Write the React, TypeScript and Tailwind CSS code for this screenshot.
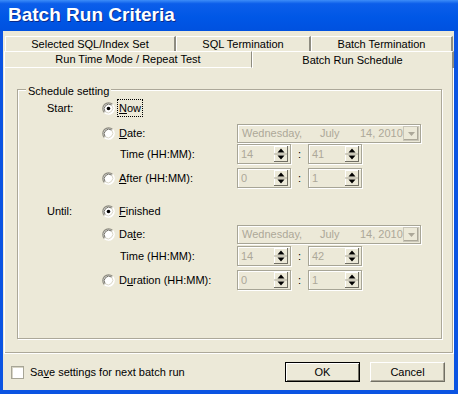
const font = "font-['Liberation_Sans',Arial,sans-serif]";

function Radio({ checked }: { checked?: boolean }) {
  return (
    <svg width="13" height="13" viewBox="0 0 13 13" className="shrink-0">
      <circle cx="6.5" cy="6.5" r="5.8" fill="#ffffff" />
      <path d="M2.4 10.6 A5.8 5.8 0 0 1 10.6 2.4" fill="none" stroke="#8E8C80" strokeWidth="1.2" />
      <path d="M10.6 2.4 A5.8 5.8 0 0 1 2.4 10.6" fill="none" stroke="#ffffff" strokeWidth="1.2" />
      <path d="M3.2 9.8 A4.7 4.7 0 0 1 9.8 3.2" fill="none" stroke="#6E6C62" strokeWidth="1" />
      <path d="M9.8 3.2 A4.7 4.7 0 0 1 3.2 9.8" fill="none" stroke="#D8D5C6" strokeWidth="1" />
      {checked && <circle cx="6.5" cy="6.5" r="1.8" fill="#000000" />}
    </svg>
  );
}

function SpinButtons() {
  return (
    <svg width="14" height="16" viewBox="0 0 14 16" className="shrink-0 mr-[2px]">
      <rect x="0" y="0" width="14" height="16" fill="#ECE9D8" />
      <path d="M0 0.5 H13.5 M0.5 0 V16" stroke="#ffffff" strokeWidth="1" />
      <path d="M13.5 0 V16 M0 15.5 H14" stroke="#716F64" strokeWidth="1" />
      <path d="M0 8 H13" stroke="#ACA899" strokeWidth="1" />
      <polygon points="3.5,6.5 10.5,6.5 7,2.5" fill="#000000" />
      <polygon points="3.5,9.5 10.5,9.5 7,13.5" fill="#000000" />
    </svg>
  );
}

function Spin({ value }: { value: string }) {
  return (
    <div className="w-[54px] h-[20px] flex items-center border border-[#A7A596] shadow-[inset_1px_1px_0_#ffffff,1px_1px_0_#ffffff]">
      <span className="flex-1 pl-[3px] text-[#ACA899]">{value}</span>
      <SpinButtons />
    </div>
  );
}

function TimeRow({ a, b }: { a: string; b: string }) {
  return (
    <div className="flex items-center">
      <Spin value={a} />
      <span className="w-[17px] text-center">:</span>
      <Spin value={b} />
    </div>
  );
}

function DatePick() {
  return (
    <div className="w-[184px] h-[19px] flex items-center border border-[#A7A596] shadow-[inset_1px_1px_0_#ffffff,1px_1px_0_#ffffff] text-[#ACA899]">
      <span className="w-[82px] pl-[4px]">Wednesday,</span>
      <span className="w-[40px]">July</span>
      <span className="flex-1">14, 2010</span>
      <div className="w-[16px] h-[15px] mr-[1px] flex items-center justify-center border border-[#C9C6B8] bg-[#ECE9D8] shadow-[inset_-1px_-1px_0_#ACA899]">
        <svg width="7" height="4" viewBox="0 0 7 4">
          <polygon points="0,0 7,0 3.5,4" fill="#ACA899" />
        </svg>
      </div>
    </div>
  );
}

function Row({ label, top, h = 20, children }: { label?: string; top: string; h?: number; children: React.ReactNode }) {
  return (
    <div className={`flex items-center pl-[29px] ${top} ${h === 19 ? "h-[19px]" : "h-[20px]"}`}>
      <span className="w-[55px]">{label}</span>
      {children}
    </div>
  );
}

function Opt({ checked, focus, children }: { checked?: boolean; focus?: boolean; children: React.ReactNode }) {
  return (
    <div className="w-[135px] flex items-center">
      <Radio checked={checked} />
      <span className={`ml-[3px] px-[1px] ${focus ? "outline outline-1 outline-dotted outline-black" : ""}`}>{children}</span>
    </div>
  );
}

export default function App() {
  return (
    <div className={`w-[458px] h-[394px] bg-[#0B54E2] flex flex-col text-[11px] text-black ${font}`}>
      <div className="h-[31px] flex items-center pl-[8px] bg-[linear-gradient(to_bottom,#3D8DF8_0%,#0C5EEA_12%,#0057E6_55%,#0051DF_100%)]">
        <span className="text-white font-bold text-[19px] [text-shadow:1px_1px_0_#0A2A8A]">Batch Run Criteria</span>
      </div>
      <div className="flex-1 ml-[3px] mr-[4px] mb-[4px] bg-[#ECE9D8] flex flex-col">
        <div className="pt-[5px] ml-[1px] w-[450px]">
          <div className="flex h-[15px] ml-[1px]">
            <div className="w-[171px] flex items-center justify-center border-t border-l border-white border-r-2 border-r-[#8E8C80]">Selected SQL/Index Set</div>
            <div className="w-[135px] flex items-center justify-center border-t border-l border-white border-r-2 border-r-[#8E8C80]">SQL Termination</div>
            <div className="w-[142px] flex items-center justify-center border-t border-l border-white border-r-2 border-r-[#8E8C80]">Batch Termination</div>
          </div>
          <div className="flex h-[17px]">
            <div className="w-[248px] flex items-center justify-center border-t border-l border-b border-white border-r border-r-[#8E8C80]">Run Time Mode / Repeat Test</div>
            <div className="w-[202px] flex items-center justify-center border-t border-l border-white border-r-2 border-r-[#8E8C80]">Batch Run Schedule</div>
          </div>
          <div className="h-[286px] border-l border-white border-r border-b border-[#716F64] border-l-white shadow-[inset_-1px_-1px_0_#ACA899] pt-[21px] pl-[12px]">
            <div className="relative w-[425px] h-[250px] border border-[#ACA899] shadow-[inset_1px_1px_0_#ffffff,1px_1px_0_#ffffff] pt-[8px]">
              <span className="absolute -top-[7px] left-[8px] px-[2px] bg-[#ECE9D8]">Schedule setting</span>
              <Row label="Start:" top="">
                <Opt checked focus><span className="underline">N</span>ow</Opt>
              </Row>
              <Row top="mt-[6px]" h={19}>
                <Opt><span className="underline">D</span>ate:</Opt>
                <DatePick />
              </Row>
              <Row top="mt-[1px]">
                <span className="w-[135px] pl-[18px]">Time (HH:MM):</span>
                <TimeRow a="14" b="41" />
              </Row>
              <Row top="mt-[4px]">
                <Opt><span className="underline">A</span>fter (HH:MM):</Opt>
                <TimeRow a="0" b="1" />
              </Row>
              <Row label="Until:" top="mt-[13px]">
                <Opt checked><span className="underline">F</span>inished</Opt>
              </Row>
              <Row top="mt-[4px]" h={19}>
                <Opt>Da<span className="underline">t</span>e:</Opt>
                <DatePick />
              </Row>
              <Row top="mt-[2px]">
                <span className="w-[135px] pl-[18px]">Time (HH:MM):</span>
                <TimeRow a="14" b="42" />
              </Row>
              <Row top="mt-[4px]">
                <Opt>D<span className="underline">u</span>ration (HH:MM):</Opt>
                <TimeRow a="0" b="1" />
              </Row>
            </div>
          </div>
        </div>
        <div className="mt-[8px] h-[20px] flex items-center">
          <div className="ml-[8px] w-[13px] h-[13px] bg-white border border-[#A7A596] shadow-[inset_1px_1px_0_#D8D5C6]" />
          <span className="ml-[6px]">Sa<span className="underline">v</span>e settings for next batch run</span>
          <div className="ml-auto flex gap-[10px] mr-[9px]">
            <button className="w-[75px] h-[20px] border border-black bg-[#ECE9D8] shadow-[inset_1px_1px_0_#ffffff,inset_-1px_-1px_0_#716F64]">OK</button>
            <button className="w-[75px] h-[20px] bg-[#ECE9D8] border border-white border-r-[#716F64] border-b-[#716F64] shadow-[inset_-1px_-1px_0_#ACA899]">Cancel</button>
          </div>
        </div>
      </div>
    </div>
  );
}
